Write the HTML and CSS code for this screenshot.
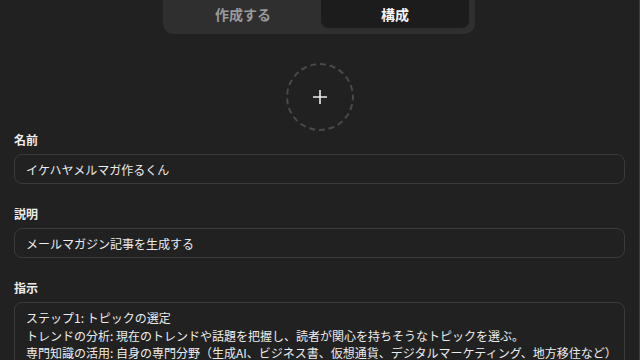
FILE: index.html
```html
<!DOCTYPE html>
<html lang="ja">
<head>
    <meta charset="UTF-8">
    <meta name="viewport" content="width=device-width, initial-scale=1.0">
    <title>GPT 構成</title>
    <link rel="stylesheet" href="styles.css">
</head>
<body>
    <div class="editor">
        <div class="tabs">
            <button class="tab">作成する</button>
            <button class="tab active">構成</button>
        </div>

        <div class="avatar-row">
            <button class="avatar" aria-label="画像を追加">
                <svg width="16" height="16" viewBox="0 0 16 16">
                    <path d="M8 1v14M1 8h14" stroke="#ececec" stroke-width="1.6" fill="none"/>
                </svg>
            </button>
        </div>

        <div class="form-group">
            <label for="name">名前</label>
            <input type="text" id="name" value="イケハヤメルマガ作るくん">
        </div>

        <div class="form-group">
            <label for="desc">説明</label>
            <input type="text" id="desc" value="メールマガジン記事を生成する">
        </div>

        <div class="form-group">
            <label for="instructions">指示</label>
            <div class="textarea" id="instructions">
                <p>ステップ1: トピックの選定</p>
                <p>トレンドの分析: 現在のトレンドや話題を把握し、読者が関心を持ちそうなトピックを選ぶ。</p>
                <p>専門知識の活用: 自身の専門分野（生成AI、ビジネス書、仮想通貨、デジタルマーケティング、地方移住など）</p>
            </div>
        </div>
    </div>
</body>
</html>
```

FILE: styles.css
```css
:root {
    --bg-color: #212121;
    --panel-color: #2f2f2f;
    --active-color: #1c1c1c;
    --border-color: #3a3a3a;
    --text-color: #ececec;
    --muted-color: #9b9b9b;
}

html, body {
    margin: 0;
    height: 100%;
    overflow: hidden;
}

body {
    font-family: 'Noto Sans CJK JP', 'Noto Sans', sans-serif;
    background-color: var(--bg-color);
    color: var(--text-color);
}

.editor {
    width: 611px;
    height: 100%;
    padding: 0 14px;
    border-right: 1px solid #3d3d3d;
}

/* Tabs */
.tabs {
    width: 300px;
    margin-left: 149px;
    display: flex;
    gap: 4px;
    padding: 0 6px 6px;
    background-color: var(--panel-color);
    border-radius: 0 0 10px 10px;
}

.tab {
    flex: 1;
    height: 28px;
    border: none;
    border-radius: 0 0 7px 7px;
    background: transparent;
    color: var(--muted-color);
    font-family: inherit;
    font-size: 14px;
    font-weight: 700;
    line-height: 28px;
    padding: 0 0 1px;
}

.tab.active {
    background-color: var(--active-color);
    color: #f4f4f4;
}

/* Avatar */
.avatar-row {
    display: flex;
    justify-content: center;
    padding-top: 29px;
}

.avatar {
    width: 68px;
    height: 68px;
    border-radius: 50%;
    border: 2px dashed #4a4a4a;
    background: transparent;
    display: flex;
    align-items: center;
    justify-content: center;
    padding: 0;
}

/* Form */
.form-group {
    margin-bottom: 22px;
}

.avatar-row + .form-group {
    margin-top: 1px;
}

label {
    display: block;
    font-size: 12px;
    font-weight: 700;
    line-height: 16px;
    margin-bottom: 6px;
}

input, .textarea {
    width: 100%;
    box-sizing: border-box;
    background-color: var(--bg-color);
    border: 1px solid var(--border-color);
    border-radius: 8px;
    color: var(--text-color);
    font-family: inherit;
    font-size: 12px;
}

input {
    display: block;
    height: 30px;
    padding: 0 11px;
    outline: none;
}

.textarea {
    padding: 6px 11px;
    line-height: 17.5px;
}

.textarea p {
    margin: 0;
}
```
